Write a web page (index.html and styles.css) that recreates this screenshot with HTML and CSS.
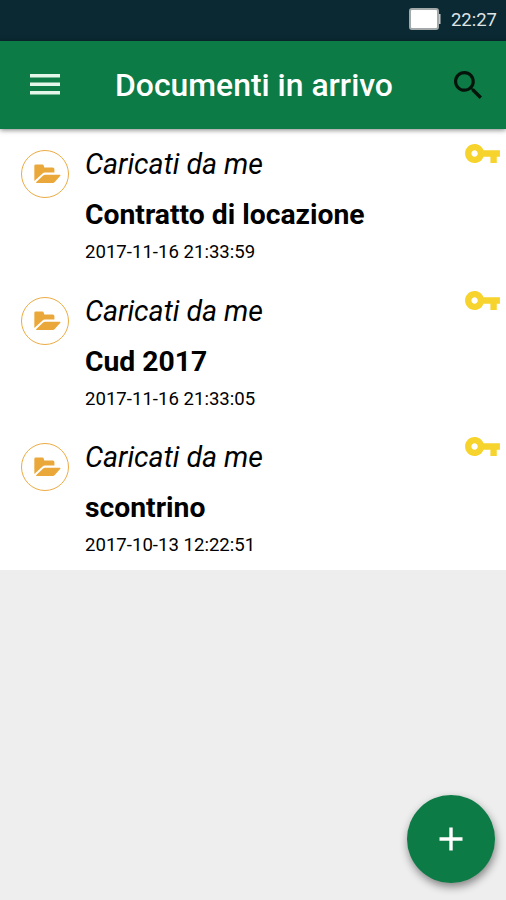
FILE: index.html
```html
<!DOCTYPE html>
<html lang="it">
<head>
    <meta charset="UTF-8">
    <meta name="viewport" content="width=device-width, initial-scale=1.0">
    <title>Documenti in arrivo</title>
    <link rel="stylesheet" href="styles.css">
</head>
<body>
    <svg class="symbols" width="0" height="0">
        <symbol id="folder" viewBox="0 0 82 59">
            <path d="M1 5q0-4 4-4h20q4 0 5 4l1 5h26q5 0 5 5v10H33q-4 0-7 3L1 51z"/>
            <path d="M34 32h44q4 0 2 3L63 54q-2 3-6 3H9q-5 0-2-3l20-19q3-3 7-3z"/>
        </symbol>
        <symbol id="key" viewBox="1 6 22 12">
            <path d="M12.65 10C11.83 7.67 9.61 6 7 6c-3.31 0-6 2.69-6 6s2.69 6 6 6c2.61 0 4.83-1.67 5.65-4H17v4h4v-4h2v-4H12.65zM7 14c-1.1 0-2-.9-2-2s.9-2 2-2 2 .9 2 2-.9 2-2 2z"/>
        </symbol>
    </svg>

    <!-- Barra di stato -->
    <div class="status-bar">
        <svg class="battery" viewBox="0 0 32 22">
            <rect x="1" y="1" width="28" height="20" rx="2" fill="#fff" stroke="#a3a9a9" stroke-width="2"/>
            <path d="M30 6h1.500v10H30z" fill="#c9cccb"/>
        </svg>
        <span class="clock">22:27</span>
    </div>

    <!-- Intestazione -->
    <header class="toolbar">
        <svg class="menu" viewBox="0 0 30 21">
            <path d="M0 0h30v3.600H0zM0 8.500h30v3.600H0zM0 17h30v3.600H0z"/>
        </svg>
        <h1>Documenti in arrivo</h1>
        <svg class="search" viewBox="3 3 17.500 17.500">
            <path d="M15.500 14h-.79l-.28-.27C15.410 12.590 16 11.110 16 9.500 16 5.910 13.090 3 9.500 3S3 5.910 3 9.500 5.910 16 9.500 16c1.610 0 3.090-.59 4.230-1.570l.27.28v.79l5 4.990L20.490 19l-4.990-5zm-6 0C7.010 14 5 11.990 5 9.500S7.010 5 9.500 5 14 7.010 14 9.500 11.990 14 9.500 14z"/>
        </svg>
    </header>

    <!-- Elenco documenti -->
    <main class="list">
        <div class="item">
            <div class="avatar"><svg><use href="#folder"/></svg></div>
            <div class="info">
                <p class="source">Caricati da me</p>
                <p class="name">Contratto di locazione</p>
                <p class="date">2017-11-16 21:33:59</p>
            </div>
            <svg class="key"><use href="#key"/></svg>
        </div>
        <div class="item">
            <div class="avatar"><svg><use href="#folder"/></svg></div>
            <div class="info">
                <p class="source">Caricati da me</p>
                <p class="name">Cud 2017</p>
                <p class="date">2017-11-16 21:33:05</p>
            </div>
            <svg class="key"><use href="#key"/></svg>
        </div>
        <div class="item">
            <div class="avatar"><svg><use href="#folder"/></svg></div>
            <div class="info">
                <p class="source">Caricati da me</p>
                <p class="name">scontrino</p>
                <p class="date">2017-10-13 12:22:51</p>
            </div>
            <svg class="key"><use href="#key"/></svg>
        </div>
    </main>

    <button class="fab" aria-label="Aggiungi">
        <svg viewBox="0 0 24 24"><path d="M10.300 0.500h3.400v9.800h9.800v3.400h-9.800v9.800h-3.400v-9.800H.5v-3.400h9.800z"/></svg>
    </button>
</body>
</html>
```
FILE: styles.css
```css
* {
    box-sizing: border-box;
}

body {
    margin: 0;
    height: 100vh;
    overflow: hidden;
    background: #eee;
    color: #000;
    font-family: Roboto, sans-serif;
}

h1, p {
    margin: 0;
    white-space: nowrap;
}

.symbols {
    position: absolute;
}

.status-bar {
    display: flex;
    justify-content: flex-end;
    align-items: center;
    height: 41px;
    padding: 0 9px 3px 0;
    background: #0a2932;
}

.battery {
    width: 32px;
    height: 22px;
    margin-right: 10px;
}

.clock {
    margin-top: 2px;
    color: #dfe4e5;
    font-size: 18.500px;
}

.toolbar {
    position: relative;
    display: flex;
    align-items: center;
    height: 88px;
    padding: 0 24px 1px 30px;
    background: #0c7b45;
    box-shadow: 0 1px 5px rgba(0, 0, 0, 0.5);
}

.menu {
    width: 30px;
    height: 21px;
    fill: #e4f5ea;
}

.toolbar h1 {
    margin: 1px 0 0 55px;
    color: #fff;
    font-size: 31.900px;
    font-weight: 500;
}

.search {
    width: 28px;
    height: 28px;
    margin-left: auto;
    fill: #04140b;
}

.list {
    background: #fff;
    padding-bottom: 1px;
}

.item {
    display: flex;
    align-items: flex-start;
    height: 146.500px;
    padding: 15px 6px 0 21px;
}

.avatar {
    display: flex;
    justify-content: center;
    align-items: center;
    width: 48px;
    height: 48px;
    margin-top: 6px;
    padding-left: 4px;
    border: 1.500px solid #ecac45;
    border-radius: 50%;
}

.avatar svg {
    width: 27px;
    height: 20px;
    fill: #eba83a;
}

.info {
    flex: 1;
    margin: 2px 0 0 16px;
}

.source {
    font-size: 28.500px;
    font-style: italic;
    line-height: 38px;
}

.name {
    margin-top: 12px;
    font-size: 28.300px;
    font-weight: 700;
    line-height: 38px;
}

.date {
    margin-top: 6px;
    font-size: 18.600px;
    line-height: 24px;
}

.key {
    width: 35px;
    height: 19px;
    fill: #f6d32d;
}

.fab {
    position: fixed;
    right: 11px;
    bottom: 17px;
    display: flex;
    justify-content: center;
    align-items: center;
    width: 88px;
    height: 88px;
    padding: 0;
    border: none;
    border-radius: 50%;
    background: #0c7b45;
    box-shadow: 1px 4px 9px rgba(0, 0, 0, 0.45);
}

.fab svg {
    width: 24px;
    height: 24px;
    fill: #fff;
}
```
